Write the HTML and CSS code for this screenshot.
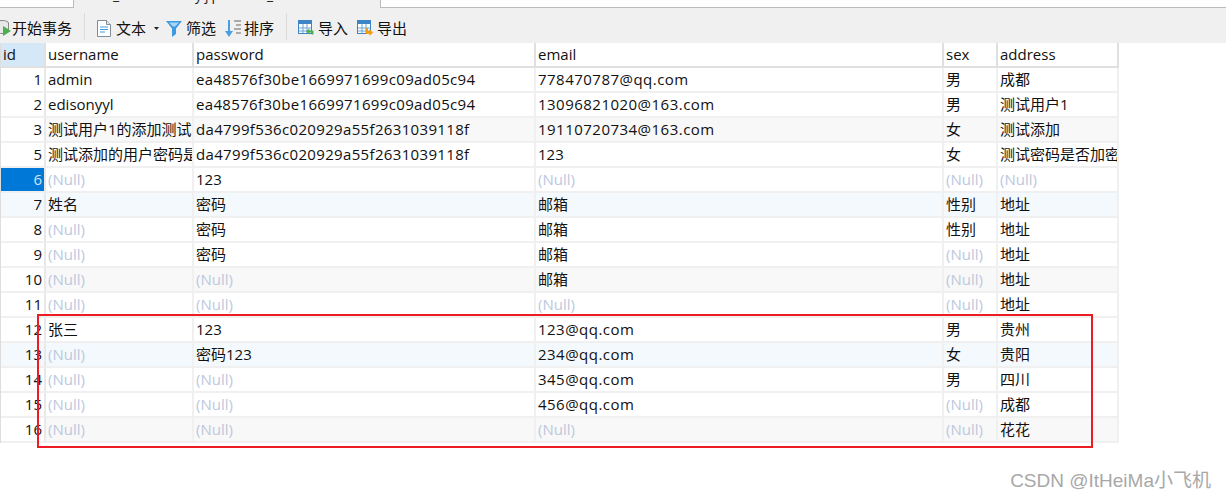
FILE: index.html
```html
<!DOCTYPE html>
<html lang="zh">
<head>
<meta charset="utf-8">
<title>数据表</title>
<link rel="stylesheet" href="styles.css">
</head>
<body>
<div class="tabs">
  <div class="tab side"></div>
  <div class="tab active"><span class="m1">_</span><span class="m2">yjp</span><span class="m3">_</span></div>
  <div class="tab rest"></div>
</div>
<div class="toolbar">
  <div class="tool first">
    <svg class="ic" width="16" height="18" viewBox="0 0 16 18"><ellipse cx="7" cy="4" rx="6.5" ry="2.5" fill="#e8e8e8" stroke="#888"/><path d="M.5 4v8c0 1.400 3 2.500 6.500 2.500s6.500-1.100 6.500-2.500V4" fill="#e8e8e8" stroke="#888"/><path d="M8 7l8 5-8 5z" fill="#4caf50"/></svg>
    <span>开始事务</span>
  </div>
  <div class="sep s1"></div>
  <div class="tool doc">
    <svg class="ic" width="14" height="17" viewBox="0 0 14 17"><path d="M.5.500h9l4 4v12H.5z" fill="#fff" stroke="#7f8c99"/><path d="M9.500.500v4h4" fill="#dfe6ec" stroke="#7f8c99"/><path d="M3 7h8M3 9.500h8M3 12h5" stroke="#3f9be0" stroke-width="1.200"/></svg>
    <span>文本</span>
    <svg class="caret" width="5" height="3" viewBox="0 0 5 3"><path d="M0 0h5L2.500 3z" fill="#222"/></svg>
  </div>
  <div class="tool filter">
    <svg class="ic" width="16" height="17" viewBox="0 0 16 17"><path d="M0 1h16L10 8.500V14l-4 3V8.500z" fill="#3f9be0"/><path d="M3 2.500h10L9 6.500H7z" fill="#a9d6f5"/></svg>
    <span>筛选</span>
  </div>
  <div class="tool sort">
    <svg class="ic" width="17" height="17" viewBox="0 0 17 17"><path d="M4 0h2v11h3l-4 6-4-6h3z" fill="#4a9fe3"/><path d="M10 1h7M12 5h5M10 9h7M12 13h5" stroke="#666" stroke-width="1"/></svg>
    <span>排序</span>
  </div>
  <div class="sep s2"></div>
  <div class="tool imp">
    <svg class="ic" width="16" height="16" viewBox="0 0 16 16"><rect x=".5" y=".5" width="13" height="13" fill="#fff" stroke="#3d85c6"/><path d="M0 0h14v4H0z" fill="#3d85c6"/><path d="M1 8h12M1 11h12M5 4v9M9 4v9" stroke="#6aa5d8"/><path d="M8 11.500l3.500-3v2h4v4h-2v-2h-2v2z" fill="#4caf50"/></svg>
    <span>导入</span>
  </div>
  <div class="tool exp">
    <svg class="ic" width="16" height="16" viewBox="0 0 16 16"><rect x=".5" y=".5" width="13" height="13" fill="#fff" stroke="#3d85c6"/><path d="M0 0h14v4H0z" fill="#3d85c6"/><path d="M1 8h12M1 11h12M5 4v9M9 4v9" stroke="#6aa5d8"/><path d="M9 8h2v3h1.500v-2l3.500 3.500-3.500 3.500v-2H9z" fill="#f39c12"/></svg>
    <span>导出</span>
  </div>
</div>
<table class="grid">
  <colgroup><col class="c-id"><col class="c-user"><col class="c-pass"><col class="c-mail"><col class="c-sex"><col class="c-addr"></colgroup>
  <thead>
    <tr><th class="sel-h">id</th><th>username</th><th>password</th><th>email</th><th>sex</th><th>address</th></tr>
  </thead>
  <tbody>
    <tr><td class="n">1</td><td>admin</td><td class="hash">ea48576f30be1669971699c09ad05c94</td><td class="mail">778470787@qq.com</td><td>男</td><td>成都</td></tr>
    <tr><td class="n">2</td><td>edisonyyl</td><td class="hash">ea48576f30be1669971699c09ad05c94</td><td class="mail">13096821020@163.com</td><td>男</td><td>测试用户1</td></tr>
    <tr class="gray"><td class="n">3</td><td>测试用户1的添加测试</td><td class="hash">da4799f536c020929a55f2631039118f</td><td class="mail">19110720734@163.com</td><td>女</td><td>测试添加</td></tr>
    <tr><td class="n">5</td><td>测试添加的用户密码是否加密</td><td class="hash">da4799f536c020929a55f2631039118f</td><td>123</td><td>女</td><td>测试密码是否加密</td></tr>
    <tr><td class="n sel">6</td><td class="null">(Null)</td><td>123</td><td class="null">(Null)</td><td class="null">(Null)</td><td class="null">(Null)</td></tr>
    <tr class="blue"><td class="n">7</td><td>姓名</td><td>密码</td><td>邮箱</td><td>性别</td><td>地址</td></tr>
    <tr><td class="n">8</td><td class="null">(Null)</td><td>密码</td><td>邮箱</td><td>性别</td><td>地址</td></tr>
    <tr><td class="n">9</td><td class="null">(Null)</td><td>密码</td><td>邮箱</td><td class="null">(Null)</td><td>地址</td></tr>
    <tr class="gray"><td class="n">10</td><td class="null">(Null)</td><td class="null">(Null)</td><td>邮箱</td><td class="null">(Null)</td><td>地址</td></tr>
    <tr><td class="n">11</td><td class="null">(Null)</td><td class="null">(Null)</td><td class="null">(Null)</td><td class="null">(Null)</td><td>地址</td></tr>
    <tr><td class="n">12</td><td>张三</td><td>123</td><td class="mail">123@qq.com</td><td>男</td><td>贵州</td></tr>
    <tr class="blue"><td class="n">13</td><td class="null">(Null)</td><td>密码123</td><td class="mail">234@qq.com</td><td>女</td><td>贵阳</td></tr>
    <tr><td class="n">14</td><td class="null">(Null)</td><td class="null">(Null)</td><td class="mail">345@qq.com</td><td>男</td><td>四川</td></tr>
    <tr><td class="n">15</td><td class="null">(Null)</td><td class="null">(Null)</td><td class="mail">456@qq.com</td><td class="null">(Null)</td><td>成都</td></tr>
    <tr class="gray"><td class="n">16</td><td class="null">(Null)</td><td class="null">(Null)</td><td class="null">(Null)</td><td class="null">(Null)</td><td>花花</td></tr>
  </tbody>
</table>
<div class="redbox"></div>
<div class="mark">CSDN @ItHeiMa小飞机</div>
</body>
</html>
```

FILE: styles.css
```css
* { box-sizing: border-box; }
html, body { margin: 0; padding: 0; }
body {
  width: 1226px;
  height: 500px;
  overflow: hidden;
  position: relative;
  background: #fff;
  color: #111;
  font: 15px/25px "Open Sans", "Noto Sans CJK SC", sans-serif;
}
.tabs { display: flex; height: 8px; }
.tab { height: 8px; overflow: hidden; }
.side { width: 74px; background: #fff; border-right: 1px solid #bbb; border-bottom: 1px solid #bbb; }
.active { width: 306px; background: #f0f0f0; position: relative; font-size: 14px; line-height: 14px; }
.active span { position: absolute; top: -12px; color: #222; }
.m1 { left: 39px; }
.m2 { left: 121px; letter-spacing: 3px; }
.m3 { left: 193px; }
.rest { flex: 1; background: #fff; border-left: 1px solid #bbb; border-bottom: 1px solid #bbb; }
.toolbar {
  display: flex;
  align-items: center;
  height: 35px;
  padding-top: 5px;
  background: #f0f0f0;
  overflow: hidden;
}
.tool { display: flex; align-items: center; flex: none; white-space: nowrap; }
.ic { flex: none; }
.first { margin-left: -5px; }
.first span { margin-left: 1px; }
.sep { width: 1px; height: 27px; margin-top: -3px; background: #dcdcdc; flex: none; }
.s1 { margin-left: 12px; }
.doc { margin-left: 12px; }
.doc span { margin-left: 5px; }
.caret { margin-left: 8px; }
.filter { margin-left: 7px; }
.filter span { margin-left: 4px; }
.sort { margin-left: 8px; }
.sort span { margin-left: 3px; }
.s2 { margin-left: 12px; }
.imp { margin-left: 11px; }
.imp span { margin-left: 4px; }
.exp { margin-left: 9px; }
.exp span { margin-left: 4px; }
.grid {
  table-layout: fixed;
  border-collapse: separate;
  border-spacing: 0;
  width: 1119px;
  border-left: 1px solid #ddd;
}
.c-id { width: 45px; }
.c-user { width: 148px; }
.c-pass { width: 342px; }
.c-mail { width: 408px; }
.c-sex { width: 54px; }
.c-addr { width: 121px; }
th, td {
  height: 25px;
  padding: 0 0 0 2px;
  overflow: hidden;
  white-space: nowrap;
  text-align: left;
  font-weight: 400;
  line-height: 23px;
  border-right: 2px solid #f0f0f0;
  border-bottom: 2px solid #f0f0f0;
}
th { border-right-color: #e0e0e0; border-bottom-color: #e0e0e0; }
.sel-h { background: #d5e8f8; padding-left: 2px; }
.n { text-align: right; padding: 0 2px 0 0; border-right-color: #e8e8e8; }
.sel { background: #0078d7; color: #cfe4f7; }
.hash { letter-spacing: .34px; }
.mail { letter-spacing: .48px; }
.gray td { background: #f8f8f8; }
.gray .n { background: #fff; }
.blue td { background: #f4f9fd; }
.blue .n { background: #f4f9fd; }
.null { color: #bcc8de; }
.redbox {
  position: absolute;
  left: 37px;
  top: 314px;
  width: 1056px;
  height: 134px;
  border: 2px solid #ed1c24;
}
.mark {
  position: absolute;
  right: 15px;
  top: 468px;
  color: #a8a8a8;
  font-size: 19px;
  line-height: 26px;
  font-family: "Liberation Sans", "Noto Sans CJK SC", sans-serif;
}
```
